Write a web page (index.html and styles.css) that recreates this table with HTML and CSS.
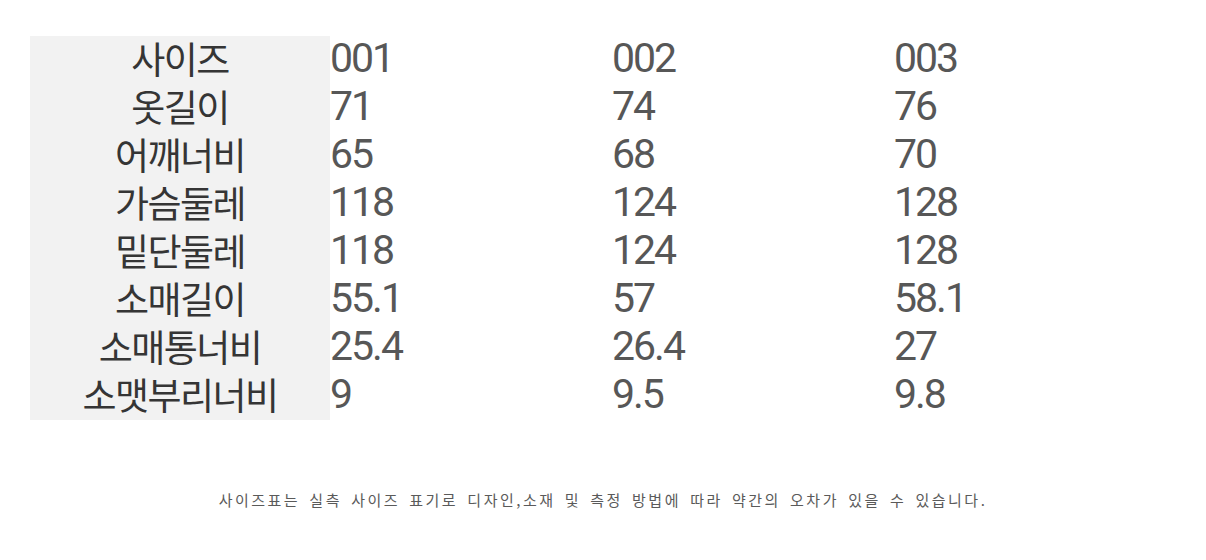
FILE: index.html
```html
<!DOCTYPE html>
<html lang="ko">
<head>
<meta charset="utf-8">
<link rel="stylesheet" href="styles.css">
</head>
<body>
<div class="page">
  <div class="size-table">
    <div class="label">사이즈</div><div class="val">001</div><div class="val">002</div><div class="val">003</div>
    <div class="label">옷길이</div><div class="val">71</div><div class="val">74</div><div class="val">76</div>
    <div class="label">어깨너비</div><div class="val">65</div><div class="val">68</div><div class="val">70</div>
    <div class="label">가슴둘레</div><div class="val">118</div><div class="val">124</div><div class="val">128</div>
    <div class="label">밑단둘레</div><div class="val">118</div><div class="val">124</div><div class="val">128</div>
    <div class="label">소매길이</div><div class="val">55.1</div><div class="val">57</div><div class="val">58.1</div>
    <div class="label">소매통너비</div><div class="val">25.4</div><div class="val">26.4</div><div class="val">27</div>
    <div class="label">소맷부리너비</div><div class="val">9</div><div class="val">9.5</div><div class="val">9.8</div>
  </div>
  <p class="note">사이즈표는 실측 사이즈 표기로 디자인,소재 및 측정 방법에 따라 약간의 오차가 있을 수 있습니다.</p>
</div>
</body>
</html>
```
FILE: styles.css
```css
html, body {
  margin: 0;
  padding: 0;
  background: #ffffff;
}
body {
  font-family: "Noto Sans CJK KR", "Noto Sans", sans-serif;
  font-weight: 400;
  width: 1206px;
  height: 560px;
  overflow: hidden;
}
.page {
  padding: 36px 0 0 30px;
}
.size-table {
  display: grid;
  grid-template-columns: 300px 282px 282px 282px;
  grid-auto-rows: 48px;
  width: 1146px;
}
.label {
  background: #f2f2f2;
  color: #353535;
  font-family: "Noto Sans CJK KR", sans-serif;
  font-weight: 400;
  font-size: 37px;
  line-height: 44px;
  padding-bottom: 4px;
  text-align: center;
  letter-spacing: -1.5px;
  white-space: nowrap;
}
.val {
  color: #575757;
  font-family: Roboto, "Liberation Sans", Arial, sans-serif;
  font-weight: 400;
  font-size: 41px;
  line-height: 45px;
  padding-bottom: 3px;
  letter-spacing: -2px;
  white-space: nowrap;
}
.note {
  margin: 70px 0 0 -30px;
  width: 1206px;
  text-align: center;
  color: #5a5a5a;
  font-size: 15px;
  letter-spacing: 2.5px;
  word-spacing: 2.5px;
  line-height: 20px;
}
```
